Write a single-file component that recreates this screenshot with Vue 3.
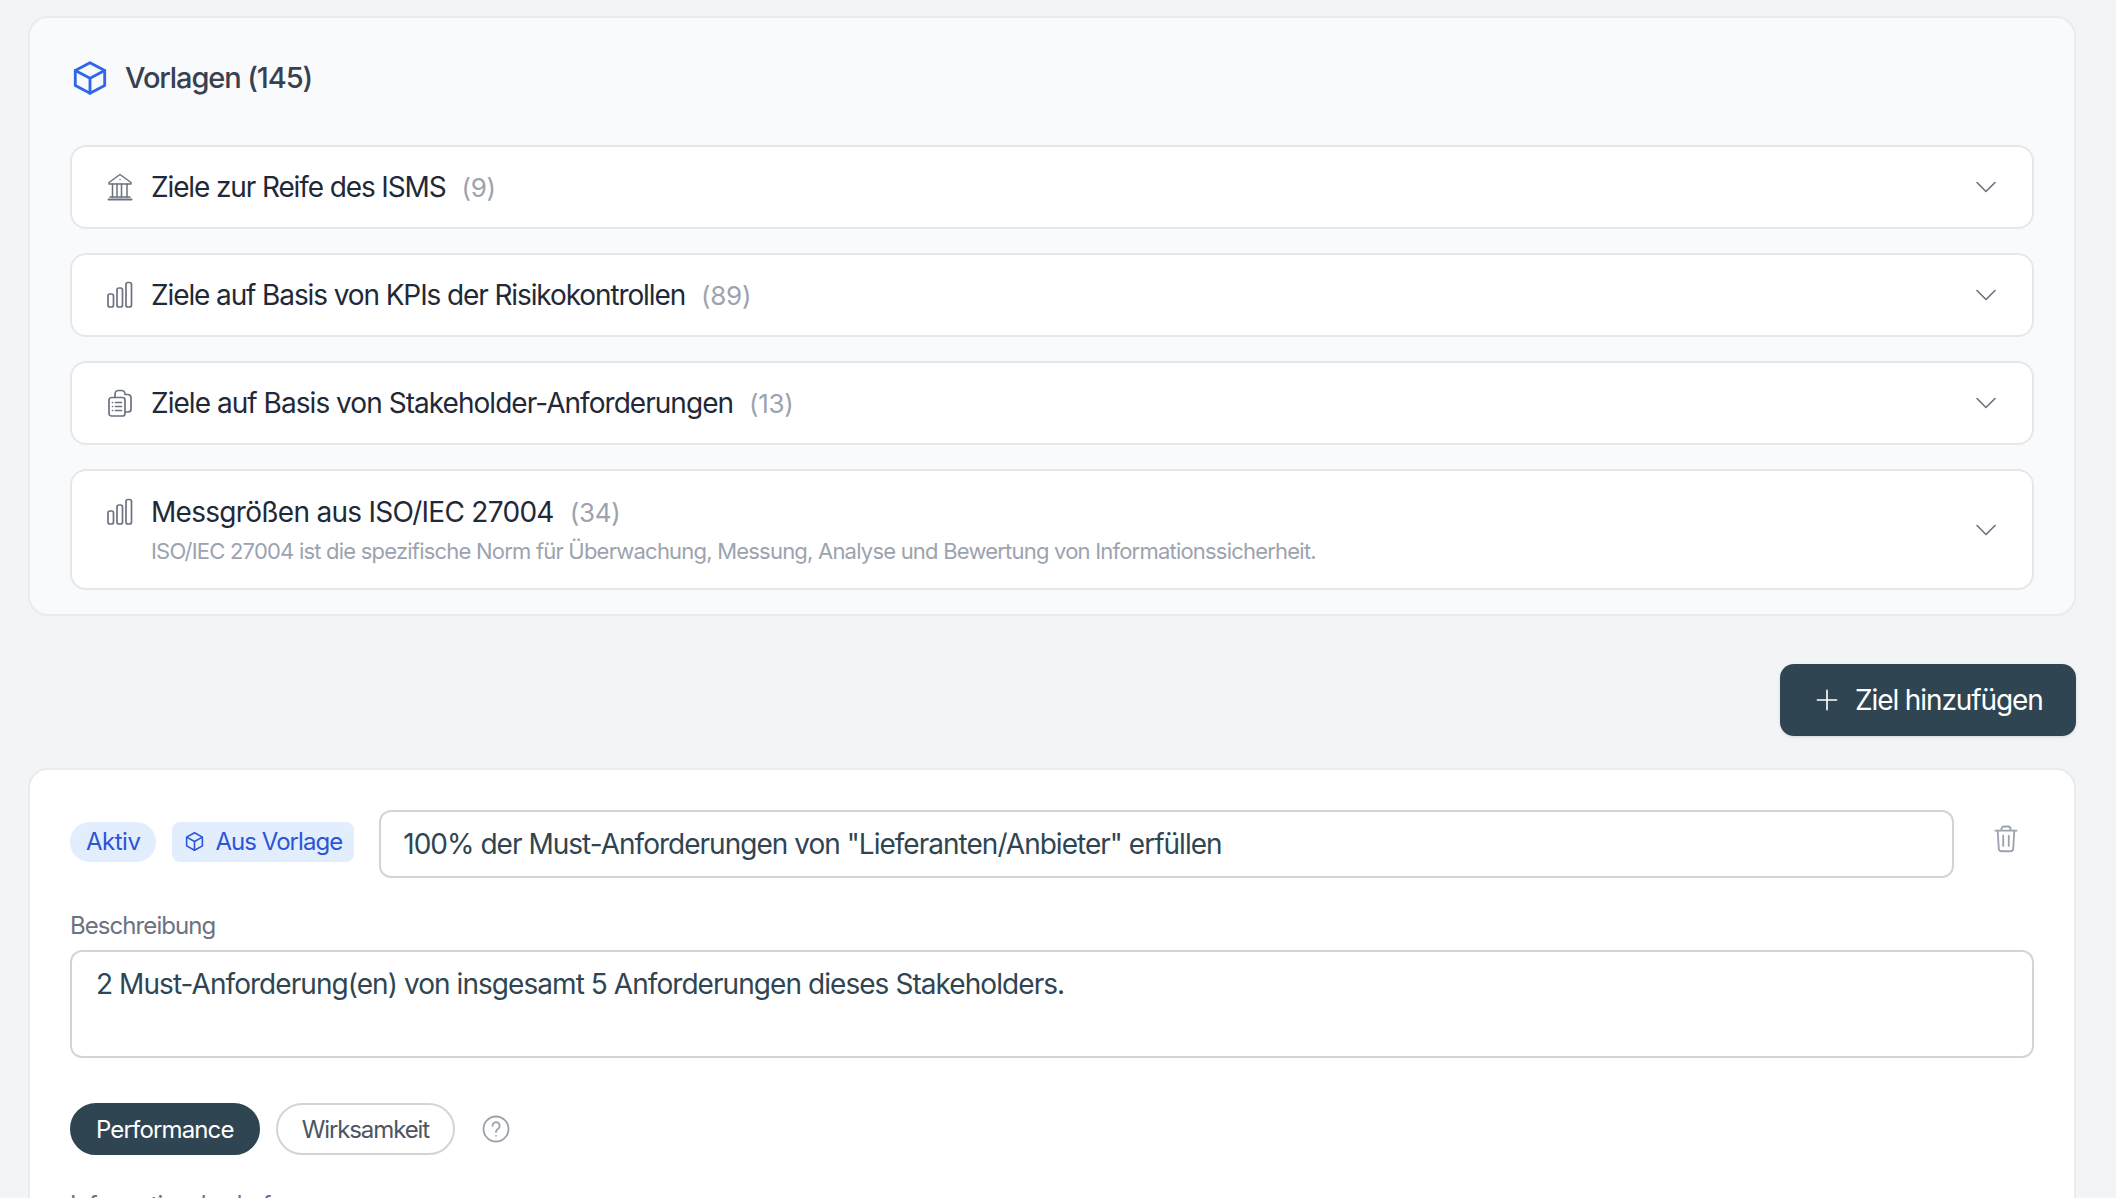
<script setup>
const rows = [
  { icon: 'bank', title: 'Ziele zur Reife des ISMS', count: '(9)', tracking: '-1.12px' },
  { icon: 'bars', title: 'Ziele auf Basis von KPIs der Risikokontrollen', count: '(89)', tracking: '-1.11px' },
  { icon: 'clip', title: 'Ziele auf Basis von Stakeholder-Anforderungen', count: '(13)', tracking: '-0.96px' },
  { icon: 'bars', title: 'Messgrößen aus ISO/IEC 27004', count: '(34)', tracking: '-0.71px', desc: 'ISO/IEC 27004 ist die spezifische Norm für Überwachung, Messung, Analyse und Bewertung von Informationssicherheit.' }
]
</script>

<template>
  <div class="page">
    <section class="templates">
      <header class="templates-head">
        <svg class="cube" viewBox="0 0 24 24" fill="none" stroke="currentColor" stroke-width="1.9" stroke-linejoin="round" stroke-linecap="round">
          <path d="M12 1.8 21.8 7v10L12 22.200 2.200 17V7z" />
          <path d="M2.200 7 12 12.200 21.800 7M12 12.200v10" />
        </svg>
        <h2>Vorlagen (145)</h2>
      </header>
      <div class="rows">
        <div v-for="r in rows" :key="r.title" class="row" :class="{ tall: r.desc }">
          <div class="row-main">
            <div class="row-line">
              <svg v-if="r.icon === 'bank'" class="ri" viewBox="0 0 28 28" fill="none" stroke="currentColor" stroke-width="1.5" stroke-linejoin="round" stroke-linecap="round">
                <path d="M14 1.500 25 9.500v1.500H3V9.500z" />
                <path d="M6.500 11v13M11 11v13M15.500 11v13M21 11v13" />
                <path d="M4 24h20M14 6.500h.01" />
                <path d="M2.500 26.500h23" stroke-width="2" />
              </svg>
              <svg v-else-if="r.icon === 'bars'" class="ri" viewBox="0 0 28 28" fill="none" stroke="currentColor" stroke-width="1.7">
                <rect x="2" y="13" width="5.500" height="13" rx="2" />
                <rect x="11" y="7" width="5.500" height="19" rx="2" />
                <rect x="20" y="1.500" width="5.500" height="24.500" rx="2" />
              </svg>
              <svg v-else class="ri" viewBox="0 0 28 28" fill="none" stroke="currentColor" stroke-width="1.7" stroke-linejoin="round" stroke-linecap="round">
                <rect x="3" y="8.500" width="16" height="18.500" rx="2.500" />
                <path d="M9 8.500V5A3.500 3.500 0 0 1 12.500 1.500h3A3.500 3.500 0 0 1 19 5V5.500h3a3 3 0 0 1 3 3V20a3 3 0 0 1-3 3H19" />
                <path d="M6.500 13.500h.01M6.500 17.500h.01M6.500 21.500h.01M9.500 13.500h6M9.500 17.500h6M9.500 21.500h6" />
              </svg>
              <span class="title" :style="{ letterSpacing: r.tracking }">{{ r.title }}</span>
              <span class="count">{{ r.count }}</span>
            </div>
            <p v-if="r.desc" class="desc">{{ r.desc }}</p>
          </div>
          <svg class="chev" viewBox="0 0 20 12" fill="none" stroke="currentColor" stroke-width="1.6" stroke-linecap="round" stroke-linejoin="round">
            <path d="M1 1.500 10 10.500 19 1.500" />
          </svg>
        </div>
      </div>
    </section>

    <div class="actions">
      <button class="add">
        <svg viewBox="0 0 24 24" fill="none" stroke="currentColor" stroke-width="1.800" stroke-linecap="round"><path d="M12 1.500v21M1.500 12h21" /></svg>
        <span>Ziel hinzufügen</span>
      </button>
    </div>

    <section class="goal">
      <div class="goal-top">
        <span class="tag round">Aktiv</span>
        <span class="tag">
          <svg viewBox="0 0 24 24" fill="none" stroke="currentColor" stroke-width="1.800" stroke-linejoin="round"><path d="M12 2 21 7v10l-9 5-9-5V7z" /><path d="M3 7l9 5 9-5M12 12v10" /></svg>
          Aus Vorlage
        </span>
        <div class="field title-field">100% der Must-Anforderungen von "Lieferanten/Anbieter" erfüllen</div>
        <svg class="trash" viewBox="0 0 26 30" fill="none" stroke="currentColor" stroke-width="2" stroke-linecap="round" stroke-linejoin="round">
          <path d="M1.500 6h23M8 6V4.500A3 3 0 0 1 11 1.500h4a3 3 0 0 1 3 3V6" />
          <path d="M4 6l1.200 19.500a3 3 0 0 0 3 2.800h9.600a3 3 0 0 0 3-2.800L22 6" />
          <path d="M10 11.500v11M16 11.500v11" />
        </svg>
      </div>
      <label class="label first">Beschreibung</label>
      <div class="field area">2 Must-Anforderung(en) von insgesamt 5 Anforderungen dieses Stakeholders.</div>
      <div class="types">
        <span class="type on">Performance</span>
        <span class="type off">Wirksamkeit</span>
        <svg class="help" viewBox="0 0 28 28" fill="none" stroke="currentColor" stroke-width="1.800" stroke-linecap="round" stroke-linejoin="round">
          <circle cx="14" cy="14" r="12.500" />
          <path d="M10.500 10.800a3.600 3.600 0 1 1 5.600 3c-1.300.9-2.100 1.600-2.100 3.200" />
          <path d="M14 20.800h.01" />
        </svg>
      </div>
      <label class="label">Informationsbedarf</label>
    </section>
  </div>
</template>

<style>
html, body { margin: 0; background: #f3f4f6; }
</style>

<style scoped>
.page {
  box-sizing: border-box;
  height: 1198px;
  overflow: hidden;
  padding: 16px 40px 0 28px;
  background: #f3f4f6;
  font-family: Inter, "Noto Sans", sans-serif;
  color: #1f2937;
}
.templates {
  box-sizing: border-box;
  height: 600px;
  padding: 0 40px;
  background: #f9fafb;
  border: 2px solid #e9ebee;
  border-radius: 20px;
}
.templates-head {
  display: flex;
  align-items: center;
  gap: 17px;
  height: 127px;
  padding-bottom: 8px;
  box-sizing: border-box;
}
.cube { width: 36px; height: 36px; color: #2f66eb; margin-left: 2px; }
h2 { margin: 0; font-size: 29px; font-weight: 500; letter-spacing: -1.1px; color: #374151; }
.rows { display: flex; flex-direction: column; gap: 24px; }
.row {
  box-sizing: border-box;
  display: flex;
  align-items: center;
  justify-content: space-between;
  height: 84px;
  padding: 0 36px 0 34px;
  background: #fff;
  border: 2px solid #e5e7eb;
  border-radius: 16px;
}
.row.tall { height: 121px; }
.row-line { display: flex; align-items: center; }
.ri { width: 28px; height: 28px; color: #6b7280; margin-right: 17px; }
.title { font-size: 28px; color: #1f2937; }
.count { font-size: 26px; color: #9ca3af; margin-left: 16px; letter-spacing: -0.3px; }
.desc { margin: 9px 0 0 45px; font-size: 22px; letter-spacing: -0.79px; color: #9ca3af; }
.chev { width: 20px; height: 12px; color: #6b7280; }
.actions { display: flex; justify-content: flex-end; margin: 48px 0 32px; }
.add {
  display: flex;
  align-items: center;
  gap: 17px;
  box-sizing: border-box;
  width: 296px;
  height: 72px;
  padding: 0 32px 0 36px;
  border: 0;
  border-radius: 14px;
  background: #2f4552;
  color: #fff;
  font: 400 28px Inter, sans-serif;
  letter-spacing: -1.1px;
  white-space: nowrap;
  box-shadow: 0 1px 3px rgba(0, 0, 0, 0.12);
}
.add svg { width: 22px; height: 22px; flex: none; }
.goal {
  box-sizing: border-box;
  height: 600px;
  padding: 40px 40px 0;
  background: #fff;
  border: 2px solid #e9ebee;
  border-radius: 20px;
}
.goal-top { display: flex; align-items: center; }
.tag {
  display: flex;
  align-items: center;
  gap: 10px;
  box-sizing: border-box;
  height: 40px;
  padding: 0 12px;
  margin: 0 16px 5px 0;
  background: #e2edfd;
  border-radius: 8px;
  color: #2b55d6;
  font-size: 24px;
  letter-spacing: -0.95px;
  white-space: nowrap;
}
.tag.round { border-radius: 20px; padding: 0 16px; letter-spacing: -0.5px; }
.tag svg { width: 21px; height: 21px; }
.field {
  box-sizing: border-box;
  border: 2px solid #d1d5db;
  border-radius: 12px;
  background: #fff;
  color: #2f4552;
  font-size: 28px;
}
.title-field {
  flex: 1;
  height: 68px;
  line-height: 64px;
  padding-left: 22px;
  margin-left: 9px;
  letter-spacing: -0.98px;
}
.trash { width: 24px; height: 28px; flex: none; color: #9ca3af; margin: 0 16px 10px 40px; }
.label { display: block; color: #6b7280; font-size: 24px; letter-spacing: -0.93px; line-height: 32px; }
.label.first { margin-top: 32px; margin-bottom: 8px; }
.area { height: 108px; padding: 15px 24px; line-height: 34px; letter-spacing: -0.94px; }
.types { display: flex; align-items: center; gap: 16px; margin-top: 45px; margin-bottom: 34px; }
.type {
  box-sizing: border-box;
  display: flex;
  align-items: center;
  justify-content: center;
  height: 52px;
  padding: 0 24px;
  border: 2px solid #d1d5db;
  border-radius: 26px;
  color: #4b5563;
  font-size: 24px;
}
.type.on { background: #2f4552; border-color: #2f4552; color: #fff; letter-spacing: -0.85px; }
.type.off { letter-spacing: -1.1px; }
.help { width: 28px; height: 28px; color: #9ca3af; margin-left: 11px; }
</style>
